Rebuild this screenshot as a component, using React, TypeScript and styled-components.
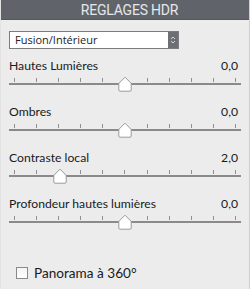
import React from "react";
import styled, { createGlobalStyle } from "styled-components";

const Global = createGlobalStyle`
  html, body { margin: 0; padding: 0; background: #ececec; }
  * { box-sizing: border-box; }
`;

const Panel = styled.div`
  width: 250px;
  height: 289px;
  background: #ececec;
  border-right: 1px solid #cfcfcf;
  border-left: 1px solid #e2e2e2;
  display: flex;
  flex-direction: column;
  font-family: Lato, "Open Sans", sans-serif;
  color: #1e1e1e;
`;

const Header = styled.div`
  height: 20px;
  background: #60646a;
  color: #e4e7eb;
  font-family: Roboto, "Open Sans", sans-serif;
  font-size: 14px;
  letter-spacing: -0.2px;
  display: flex;
  align-items: center;
  justify-content: center;
  padding-left: 9px;
  border-bottom: 1px solid #55595e;
`;

const Body = styled.div`
  display: flex;
  flex-direction: column;
  padding: 11px 8px 0 8px;
`;

const Select = styled.div`
  width: 170px;
  height: 18px;
  border: 1px solid #7c7c7c;
  background: #fff;
  display: flex;
  align-items: stretch;
  margin-bottom: 6px;
`;

const SelectText = styled.div`
  flex: 1;
  font-family: "Open Sans", sans-serif;
  font-size: 11px;
  line-height: 16px;
  padding-left: 5px;
  color: #222;
`;

const SelectButton = styled.div`
  width: 10px;
  background: #6c6f74;
  display: flex;
  align-items: center;
  justify-content: center;
`;

const Group = styled.div`
  display: flex;
  flex-direction: column;
  margin-bottom: 8px;
`;

const LabelRow = styled.div`
  height: 20px;
  display: flex;
  justify-content: space-between;
  align-items: center;
  font-size: 12.2px;
  padding-right: 3px;
  color: #1a1a1a;
`;

const Slider = styled.div`
  position: relative;
  height: 18px;
`;

const Ticks = styled.div`
  position: absolute;
  top: 3px;
  left: 5px;
  right: 5px;
  height: 4px;
  display: flex;
  justify-content: space-between;
`;

const Tick = styled.span`
  width: 1px;
  height: 4px;
  background: #8f8f8f;
`;

const Track = styled.div`
  position: absolute;
  top: 8px;
  left: 0;
  right: 0;
  height: 2px;
  background: #8a8a8a;
`;

const Thumb = styled.svg`
  position: absolute;
  top: 1px;
  width: 14px;
  height: 16px;
  margin-left: -7px;
`;

const CheckRow = styled.label`
  height: 20px;
  display: flex;
  align-items: center;
  gap: 6px;
  margin-top: 24px;
  padding-left: 7px;
  font-size: 13.6px;
  color: #1a1a1a;
`;

const Box = styled.span`
  width: 12px;
  height: 12px;
  border: 1px solid #8a8a8a;
  background: linear-gradient(#f4f4f4, #ffffff);
`;

type SliderProps = { label: string; value: string; pos: number };

const SliderGroup = ({ label, value, pos }: SliderProps) => (
  <Group>
    <LabelRow>
      <span>{label}</span>
      <span>{value}</span>
    </LabelRow>
    <Slider>
      <Ticks>
        {Array.from({ length: 11 }).map((_, i) => (
          <Tick key={i} />
        ))}
      </Ticks>
      <Track />
      <Thumb style={{ left: `${pos}%` }} viewBox="0 0 14 16">
        <path
          d="M7 1.2 L12.8 7 Q13.2 7.4 13.2 8 L13.2 14 Q13.2 15.2 12 15.2 L2 15.2 Q0.8 15.2 0.8 14 L0.8 8 Q0.8 7.4 1.2 7 Z"
          fill="#ffffff"
          stroke="#9a9a9a"
          strokeWidth="1"
        />
      </Thumb>
    </Slider>
  </Group>
);

export default function App() {
  return (
    <>
      <Global />
      <Panel>
        <Header>REGLAGES HDR</Header>
        <Body>
          <Select>
            <SelectText>Fusion/Intérieur</SelectText>
            <SelectButton>
              <svg width="6" height="10" viewBox="0 0 6 10">
                <path d="M1 4 L3 2 L5 4" fill="none" stroke="#d8d8d8" strokeWidth="1" />
                <path d="M1 6 L3 8 L5 6" fill="none" stroke="#d8d8d8" strokeWidth="1" />
              </svg>
            </SelectButton>
          </Select>
          <SliderGroup label="Hautes Lumières" value="0,0" pos={50} />
          <SliderGroup label="Ombres" value="0,0" pos={50} />
          <SliderGroup label="Contraste local" value="2,0" pos={21.8} />
          <SliderGroup label="Profondeur hautes lumières" value="0,0" pos={50} />
          <CheckRow>
            <Box />
            <span>Panorama à 360°</span>
          </CheckRow>
        </Body>
      </Panel>
    </>
  );
}
